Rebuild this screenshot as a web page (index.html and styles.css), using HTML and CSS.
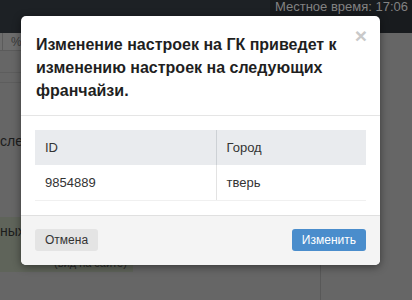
FILE: index.html
```html
<!DOCTYPE html>
<html lang="ru">
<head>
<meta charset="utf-8">
<title>Изменение настроек</title>
<link rel="stylesheet" href="styles.css">
</head>
<body>
<header class="navbar">
  <div class="nav-fill"></div>
  <div class="nav-time">Местное время: 17:06</div>
</header>
<main class="page">
  <section class="left-col">
    <div class="grid-head">
      <div class="grid-cell grid-cell-first"></div>
      <div class="grid-cell">%</div>
    </div>
    <div class="grid-line grid-line-1"></div>
    <div class="grid-line grid-line-2"></div>
    <p class="bg-text bg-text-after">сле :</p>
    <div class="green-block">
      <p class="bg-text">ных ф</p>
      <p class="bg-note">(вид на сайте)</p>
    </div>
  </section>
  <section class="right-col"></section>
</main>

<div class="modal" role="dialog">
  <div class="modal-header">
    <button class="close" type="button">×</button>
    <h4 class="modal-title">Изменение настроек на ГК приведет к изменению настроек на следующих франчайзи.</h4>
  </div>
  <div class="modal-body">
    <table class="data-table">
      <thead>
        <tr><th class="col-id">ID</th><th class="col-city">Город</th></tr>
      </thead>
      <tbody>
        <tr><td class="col-id">9854889</td><td class="col-city">тверь</td></tr>
      </tbody>
    </table>
  </div>
  <div class="modal-footer">
    <button class="btn btn-default" type="button">Отмена</button>
    <button class="btn btn-primary" type="button">Изменить</button>
  </div>
</div>
</body>
</html>
```

FILE: styles.css
```css
* { box-sizing: border-box; }

html, body {
  margin: 0;
  padding: 0;
  width: 412px;
  height: 300px;
  overflow: hidden;
}

body {
  font-family: "Liberation Sans", Arial, sans-serif;
  background: #666666;
  color: #333;
}

.navbar {
  display: flex;
  height: 33px;
  background: #1d2125;
}

.nav-fill { flex: 1; }

.nav-time {
  width: 142px;
  text-align: right;
  background: #181b1e;
  color: #828282;
  font-size: 13px;
  line-height: 14px;
  padding: 0 4px 0 0;
  white-space: nowrap;
}

.page {
  display: flex;
  height: 267px;
}

.left-col {
  width: 321px;
  border-right: 1px solid #585858;
}

.right-col { flex: 1; }

.grid-head {
  display: flex;
  height: 18px;
  background: #6d6d6d;
  border-bottom: 1px solid #5b5b5b;
}

.grid-cell {
  font-size: 12px;
  line-height: 18px;
  color: #3a3a3a;
  padding-left: 8px;
}

.grid-cell-first {
  width: 3px;
  padding: 0;
  border-right: 1px solid #5b5b5b;
}

.grid-line {
  height: 1px;
  background: #5d5d5d;
}

.grid-line-1 { margin-top: 21px; }
.grid-line-2 { margin-top: 9px; }

.bg-text {
  margin: 0;
  font-size: 14px;
  line-height: 17px;
  color: #1c1c1c;
  white-space: nowrap;
}

.bg-text-after { margin-top: 50px; }

.green-block {
  margin-top: 67px;
  width: 133px;
  height: 55px;
  background: #5f645a;
  padding-top: 6px;
}

.bg-note {
  margin: 15px 0 0;
  padding-left: 54px;
  font-size: 11px;
  line-height: 17px;
  color: #2a2a2a;
  white-space: nowrap;
}

/* modal */
.modal {
  position: absolute;
  top: 16px;
  left: 21px;
  width: 359px;
  background: #fff;
  border-radius: 5px;
  box-shadow: 0 2px 8px rgba(0, 0, 0, 0.45);
}

.modal-header {
  padding: 17px 15px 13px;
  border-bottom: 1px solid #e5e5e5;
}

.close {
  float: right;
  margin-top: -8px;
  margin-right: -2px;
  padding: 0;
  border: 0;
  background: transparent;
  font-family: "Liberation Sans", Arial, sans-serif;
  font-size: 21px;
  font-weight: bold;
  line-height: 21px;
  color: #c9c9c9;
}

.modal-title {
  margin: 0;
  font-size: 16px;
  font-weight: bold;
  line-height: 23px;
  color: #1f1f1f;
}

.modal-body {
  padding: 14px;
}

.data-table {
  width: 100%;
  border-collapse: collapse;
  font-size: 13px;
}

.data-table th,
.data-table td {
  text-align: left;
  font-weight: normal;
  padding: 8px 10px;
  line-height: 19px;
  color: #333;
}

.data-table th {
  background: #e9ebee;
}

.data-table td {
  border-bottom: 1px solid #f0f0f0;
}

.data-table .col-id { width: 181px; }

.data-table th.col-city { border-left: 1px solid #cdd1d5; }
.data-table td.col-city { border-left: 1px solid #e3e3e3; }

.modal-footer {
  display: flex;
  justify-content: space-between;
  padding: 13px 14px 14px;
  background: #f4f4f4;
  border-top: 1px solid #e0e0e0;
  border-radius: 0 0 5px 5px;
}

.btn {
  font-family: "Liberation Sans", Arial, sans-serif;
  font-size: 12px;
  line-height: 18px;
  height: 22px;
  padding: 2px 10px;
  border: 0;
  border-radius: 3px;
}

.btn-default {
  background: #e4e4e4;
  color: #333;
}

.btn-primary {
  background: #4a8dcc;
  color: #fff;
}
```
